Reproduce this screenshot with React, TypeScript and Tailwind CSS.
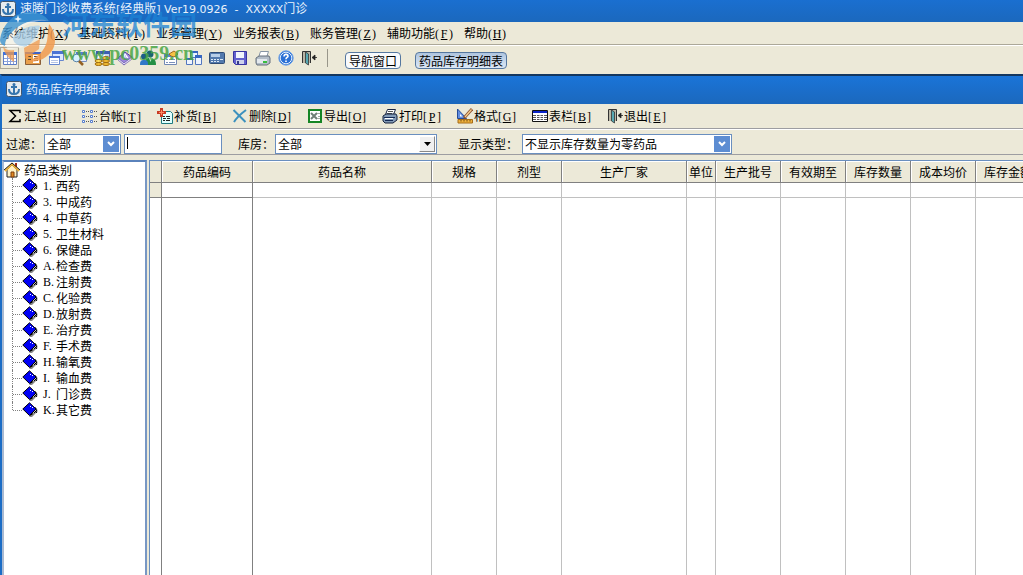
import type { ReactNode } from "react";

type Kids = { children?: ReactNode };

const Key = ({ open, k, close }: { open: string; k: string; close: string }) => (
  <span className="inline-flex w-[18px] justify-between font-['Liberation_Serif',serif] text-[12px]">
    <span>{open}</span>
    <u>{k}</u>
    <span>{close}</span>
  </span>
);

const Pic = ({ children }: Kids) => (
  <svg viewBox="0 0 16 16" className="h-4 w-4 shrink-0" aria-hidden="true">
    {children}
  </svg>
);

const AnchorIcon = () => (
  <Pic>
    <rect x="0.5" y="0.5" width="15" height="15" rx="2" fill="#e6ebf0" stroke="#42566e" />
    <path d="M8 4v9M5 6h6M3 8c0 3 2 5 5 5s5-2 5-5" fill="none" stroke="#3674ad" strokeWidth="2" />
    <circle cx="8" cy="3.5" r="1.5" fill="#3674ad" />
  </Pic>
);

const GridIcon = () => (
  <Pic>
    <path d="M1.500 2.500h13v12h-13z" fill="#fff" stroke="#5c7cc4" />
    <path d="M1 2h14v3H1z" fill="#3f73dc" />
    <path d="M2 8.500h12M2 11.500h12M5.500 5v9M8.500 5v9M11.500 5v9" stroke="#8ba3dc" fill="none" />
  </Pic>
);
const FormIcon = () => (
  <Pic>
    <path d="M.5 2.500h15v12H.5z" fill="#e9a04c" stroke="#8a5f39" />
    <path d="M0 2h16v2H0z" fill="#3f63c8" />
    <path d="M8 5h6v8H8z" fill="#fff" />
    <path d="M9 6.500h4M9 8.500h4M9 10.500h4M3 6.500h3M3 9.500h3" stroke="#5d4834" />
  </Pic>
);
const WindowsIcon = () => (
  <Pic>
    <path d="M4.500 1.500h11v9h-11z" fill="#dce8ff" stroke="#6687cf" />
    <path d="M4 1h12v3H4z" fill="#4a73d4" />
    <path d="M1.500 6.500h10v8h-10z" fill="#fff" stroke="#6687cf" />
    <path d="M1 6h11v2H1z" fill="#4a73d4" />
    <path d="M3 10.500h7M3 12.500h7" stroke="#b3c3e6" />
  </Pic>
);
const SearchIcon = () => (
  <Pic>
    <path d="M5.500 3.500h10v8h-10z" fill="#e8eefb" stroke="#7890c0" />
    <path d="M5 2h11v3H5z" fill="#567dce" />
    <circle cx="5.500" cy="8" r="3.800" fill="#d8f2ff" stroke="#5682a8" />
    <path d="M8 11l4 4" stroke="#946124" strokeWidth="2.500" />
  </Pic>
);
const CoinsIcon = () => (
  <Pic>
    <path d="M2.500 1.500h13v8h-13z" fill="#c6d3ef" stroke="#5672ad" />
    <path d="M2 1h14v3H2z" fill="#3d5eb0" />
    <path d="M4 6h3v2H4zM8 5h3v2H8z" fill="#fff" />
    <ellipse cx="12" cy="8" rx="3.500" ry="1.500" fill="#ffdf5a" stroke="#9c6a12" />
    <ellipse cx="12" cy="11" rx="3.500" ry="1.500" fill="#f3bd33" stroke="#9c6a12" />
    <ellipse cx="12" cy="14" rx="3.500" ry="1.500" fill="#f3bd33" stroke="#9c6a12" />
    <ellipse cx="4.500" cy="11" rx="3.500" ry="1.500" fill="#ffdf5a" stroke="#9c6a12" />
    <ellipse cx="4.500" cy="14" rx="3.500" ry="1.500" fill="#f3bd33" stroke="#9c6a12" />
  </Pic>
);
const BookIcon = () => (
  <Pic>
    <path d="M1 8l7-6 7 5-8 8z" fill="#9b86da" stroke="#54429a" />
    <path d="M1 8l6 5 8-6v2l-8 6-6-5z" fill="#e9e4fa" stroke="#54429a" strokeWidth=".6" />
    <path d="M6 9l2-5 3 4M7 7h3" stroke="#fff" strokeWidth="1.200" fill="none" />
  </Pic>
);
const PeopleIcon = () => (
  <Pic>
    <circle cx="10" cy="4" r="3.500" fill="#1b6472" />
    <path d="M5 15c0-6 1-7 5-7s6 2 6 7z" fill="#249045" />
    <circle cx="4" cy="6.500" r="3" fill="#1d5d88" />
    <path d="M0 15c0-4 1-5 4-5s4 1 4 5z" fill="#3078c8" />
    <path d="M9 8h3l-1.500 4z" fill="#bfe9cf" />
  </Pic>
);
const NoteIcon = () => (
  <Pic>
    <path d="M1.500 4.500h12v10h-12z" fill="#fff" stroke="#7289b5" />
    <path d="M1 4h13v3H1z" fill="#5e80cd" />
    <path d="M3 9.500h2M6 9.500h6M3 12.500h2M6 12.500h6" stroke="#7b91bc" />
    <path d="M6 4l5-3 4 3-4 3-3-1z" fill="#f5c244" stroke="#a36b22" />
  </Pic>
);
const LinkIcon = () => (
  <Pic>
    <path d="M4.500 1.500h7v6h-7zM.5 8.500h6v6h-6zM9.500 5.500h6v9h-6z" fill="#edf4ff" stroke="#5377bf" />
    <path d="M4 1h8v2H4zM0 8h7v2H0zM9 5h7v3H9z" fill="#3566c1" />
  </Pic>
);
const CardIcon = () => (
  <Pic>
    <rect x=".5" y="2.500" width="15" height="11" rx="1" fill="#5279ad" stroke="#314d75" />
    <path d="M2 4h9v3H2z" fill="#b7cee8" />
    <path d="M2 9h2v1H2zM5 9h2v1H5zM8 9h2v1H8zM11 9h3v1h-3zM2 11h2v1H2zM5 11h2v1H5zM8 11h2v1H8z" fill="#dce9f5" />
  </Pic>
);
const SaveIcon = () => (
  <Pic>
    <path d="M1.500 1.500h13v13h-11l-2-2z" fill="#6260ce" stroke="#3733a0" />
    <path d="M4 2h8v6H4z" fill="#f1f4fc" />
    <path d="M4 10h8v4H4z" fill="#cdd1ec" />
    <path d="M5 11h2v3H5z" fill="#373e87" />
  </Pic>
);
const PrintIcon = () => (
  <Pic>
    <path d="M5.500 1.500h8l-2 6h-8z" fill="#fff" stroke="#8795a5" />
    <path d="M1 8l3-2h10l1 2v5l-3 2H2l-1-2z" fill="#b3bdc8" stroke="#67717d" />
    <path d="M2 9h10v4H2z" fill="#e4e9ee" />
    <path d="M8 11h4v2H8z" fill="#38bd3f" />
  </Pic>
);
const HelpIcon = () => (
  <Pic>
    <circle cx="8" cy="8" r="7.200" fill="#2b70d5" stroke="#6da1e6" />
    <circle cx="8" cy="8" r="5.800" fill="none" stroke="#e2edfb" />
    <path d="M6 6.500c0-3 4-2.500 4-.3 0 1.300-2 1.300-2 3M8 10.500V12" fill="none" stroke="#fff" strokeWidth="1.600" />
  </Pic>
);
const ExitIcon = () => (
  <Pic>
    <path d="M1.500 13V1.500h8V13" fill="#b9b5a5" stroke="#333" />
    <path d="M4.500 2l3 2v11l-3-2z" fill="#58a8b2" stroke="#333" strokeWidth=".8" />
    <path d="M16 7.500h-4M14 5v5L11 7.500z" stroke="#222" fill="#222" strokeWidth=".8" />
  </Pic>
);
const SigmaIcon = () => (
  <Pic>
    <path d="M13 5V2.500H3L8.500 8 3 13.500h10V11" fill="none" stroke="#000" strokeWidth="1.500" />
  </Pic>
);
const ListIcon = () => (
  <Pic>
    <path d="M.5 2.500h2v2h-2zM.5 7.500h2v2h-2zM.5 12.500h2v2h-2zM8.500 2.500h2v2h-2zM8.500 7.500h2v2h-2zM8.500 12.500h2v2h-2z" fill="#fff" stroke="#547cce" />
    <path d="M4 3.500h3M4 8.500h3M4 13.500h3M12 3.500h3M12 8.500h3M12 13.500h3" stroke="#555" strokeDasharray="1 1" />
  </Pic>
);
const RestockIcon = () => (
  <Pic>
    <path d="M4.500 3.500h9l2 2v10h-11z" fill="#e0ffff" stroke="#207b80" />
    <path d="M6 8.500h2M9 8.500h4M6 10.500h3M10 10.500h3M6 12.500h2M9 12.500h4" stroke="#222" />
    <path d="M3 0h3v3h3v3H6v3H3V6H0V3h3z" fill="#c83b25" />
    <path d="M4.500 2v5M2 4.500h5" stroke="#ff8b65" />
  </Pic>
);
const DeleteIcon = () => (
  <Pic>
    <path d="M1.500 2l12 12M14 2C10 5 5 9 2 14" fill="none" stroke="#3c91be" strokeWidth="2" />
  </Pic>
);
const ExcelIcon = () => (
  <Pic>
    <path d="M2 2h12v12H2z" fill="#fff" stroke="#158525" strokeWidth="2" />
    <path d="M4 5l6 6M10 5l-6 6" stroke="#708078" strokeWidth="2" />
    <path d="M10 5.500h3M11 8.500h2M10 10.500h3" stroke="#a2aaa5" />
  </Pic>
);
const PrinterIcon = () => (
  <Pic>
    <path d="M5.500 1.500h8l-2 5h-8z" fill="#fff" stroke="#172343" />
    <path d="M6 3.500h5M5 5.500h5" stroke="#555" />
    <path d="M1 8l3-2h10l1 2v4l-4 3H3l-2-2z" fill="#839bb8" stroke="#16223d" />
    <path d="M2 9.500h11M3 12.500h8" stroke="#152a55" />
    <path d="M3 10.500h8" stroke="#fff" />
  </Pic>
);
const FormatIcon = () => (
  <Pic>
    <path d="M.5 1l9 9.500h-9z" fill="#638ee0" stroke="#244b9a" />
    <path d="M3 6l2.500 2.500H3z" fill="#fff" />
    <path d="M1 11.500h14.500v3.500H1z" fill="#efb13d" stroke="#a66c18" />
    <path d="M4 12v1.500M7 12v1.500M10 12v1.500M13 12v1.500" stroke="#714a12" />
    <path d="M15 1L7 10" stroke="#8c5131" strokeWidth="3" />
    <path d="M14.500 1.500L8 9" stroke="#f7cf8c" strokeWidth="1.200" />
  </Pic>
);
const TableIcon = () => (
  <Pic>
    <path d="M.5 2.500h15v11H.5z" fill="#fff" stroke="#111" />
    <path d="M1 3h14v2H1z" fill="#0b24c9" />
    <path d="M1 7.500h14M1 9.500h14M1 11.500h14" stroke="#555" />
    <path d="M4.500 5v8M8 5v8M11.500 5v8" stroke="#fff" />
  </Pic>
);
const HouseIcon = () => (
  <Pic>
    <path d="M11 1h2v4h-2z" fill="#a12c16" />
    <path d="M3 8l5-5 5 5v7H3z" fill="#fff3c7" stroke="#222" />
    <path d="M1 9l7-7 7 7" fill="none" stroke="#efb43c" strokeWidth="2" />
    <path d="M0 8l8-7 8 7" fill="none" stroke="#222" />
    <path d="M7 10h3v5H7z" fill="#e38a20" stroke="#7d3d0c" />
  </Pic>
);
const DiamondIcon = () => (
  <Pic>
    <path d="M7 15l7-7v3l-4 4H7z" fill="#888" />
    <path d="M.8 7L7.500.8 14 7l-6.500 6.500z" fill="#0000f5" stroke="#000" />
    <path d="M13 5.500c2 1 2 3 1.500 5.500M12 11l3-3M8 13.500l3-2" fill="none" stroke="#000" />
    <path d="M8 4h1v1H8zM10 5h1v1h-1z" fill="#fff" />
  </Pic>
);

const menus = [
  ["系统维护", "X"],
  ["基础资料", "I"],
  ["业务管理", "Y"],
  ["业务报表", "B"],
  ["账务管理", "Z"],
  ["辅助功能", "F"],
  ["帮助", "H"],
];

const tools = [
  ["表格", GridIcon],
  ["表单", FormIcon],
  ["窗口", WindowsIcon],
  ["查询", SearchIcon],
  ["收费", CoinsIcon],
  ["账簿", BookIcon],
  ["人员", PeopleIcon],
  ["单据", NoteIcon],
  ["关联", LinkIcon],
  ["卡片", CardIcon],
  ["保存", SaveIcon],
  ["打印", PrintIcon],
  ["帮助", HelpIcon],
  ["退出", ExitIcon],
] as const;

const actions = [
  ["汇总", "H", SigmaIcon],
  ["台帐", "T", ListIcon],
  ["补货", "B", RestockIcon],
  ["删除", "D", DeleteIcon],
  ["导出", "O", ExcelIcon],
  ["打印", "P", PrinterIcon],
  ["格式", "G", FormatIcon],
  ["表栏", "B", TableIcon],
  ["退出", "E", ExitIcon],
] as const;

const categories = [
  ["1", "西药"],
  ["3", "中成药"],
  ["4", "中草药"],
  ["5", "卫生材料"],
  ["6", "保健品"],
  ["A", "检查费"],
  ["B", "注射费"],
  ["C", "化验费"],
  ["D", "放射费"],
  ["E", "治疗费"],
  ["F", "手术费"],
  ["H", "输氧费"],
  ["I", "输血费"],
  ["J", "门诊费"],
  ["K", "其它费"],
];

const columns = [
  ["药品编码", "w-[91px]"],
  ["药品名称", "w-[179px]"],
  ["规格", "w-[65px]"],
  ["剂型", "w-[65px]"],
  ["生产厂家", "w-[125px]"],
  ["单位", "w-[29px]"],
  ["生产批号", "w-[65px]"],
  ["有效期至", "w-[65px]"],
  ["库存数量", "w-[65px]"],
  ["成本均价", "w-[65px]"],
  ["库存金额", "w-[65px]"],
];

function Picker({ id, value, width, classic }: { id: string; value: string; width: string; classic?: boolean }) {
  return (
    <span className={`relative block h-5 ${width}`}>
      <select
        id={id}
        className="block h-5 w-full appearance-none border border-[#6a8fbf] bg-white pl-0.5 leading-[18px] outline-none"
      >
        <option>{value}</option>
      </select>
      {classic ? (
        <span className="pointer-events-none absolute top-0.5 right-0.5 flex h-4 w-4 items-center justify-center border border-t-white border-r-[#888] border-b-[#888] border-l-white bg-[#f0f0f0]">
          <svg viewBox="0 0 7 4" className="h-1 w-[7px]"><path d="M0 0h7L3.500 4z" /></svg>
        </span>
      ) : (
        <span className="pointer-events-none absolute top-0.5 right-0.5 flex h-4 w-4 items-center justify-center bg-[#5d8dd2]">
          <svg viewBox="0 0 8 6" className="h-1.5 w-2"><path d="M1 1l3 3 3-3" fill="none" stroke="#fff" strokeWidth="2" /></svg>
        </span>
      )}
    </span>
  );
}

function Watermark() {
  return (
    <div className="pointer-events-none absolute top-2 left-0 flex items-start gap-1">
      <svg viewBox="0 0 58 56" className="h-14 w-[58px]" aria-hidden="true">
        <path d="M0 32C2 18 12 5 29 4c9 0 16 3 20 9C37 9 18 14 8 29c-3 4-3 7-3 9-3-1-5-3-5-6z" fill="#3c93d2" opacity=".8" />
        <path d="M13 30c7-9 17-13 27-12-2 8-7 17-14 20-6 1-13-2-13-8z" fill="#3c93d2" opacity=".6" />
        <path d="M49 13C37 9 18 14 8 29c-3 5-3 9 0 12 9 0 18-2 24-7 4-4 8-10 8-16-10-1-20 3-27 12 4-10 19-19 36-17z" fill="#fff" opacity=".45" />
        <path d="M49 16c6 7 8 17 4 25-5 9-14 13-25 13 9-5 17-11 19-21 1-6 1-11 2-17z" fill="#f19a4e" opacity=".85" />
        <path d="M3 38c2 4 6 5 11 4v12C8 50 4 45 3 38z" fill="#f19a4e" opacity=".75" />
        <path d="M24 40l16-9-1 10-14 10z" fill="#f19a4e" opacity=".75" />
        <path d="M18 7l1 3 3 1-3 1-1 3-1-3-3-1 3-1z" fill="#e9f3fb" />
      </svg>
      <div className="flex flex-col">
        <span className="h-8 text-[27px] leading-8 font-bold text-[#1c83d5]/75">河东软件园</span>
        <span className="pt-px font-['Liberation_Serif',serif] text-[20px] leading-6 font-bold text-[#4aa646]/85">www.pc0359.cn</span>
      </div>
    </div>
  );
}

export default function App() {
  return (
    <div className="relative flex h-screen flex-col overflow-hidden bg-[#ece9d8] font-['Noto_Sans_CJK_SC',sans-serif] text-[12px] leading-4 text-black">
      <header className="flex h-[22px] shrink-0 items-center gap-1 bg-linear-to-b from-[#1a6fd0] to-[#1b68bd] pb-1 text-[#e8f1fb]">
        <AnchorIcon />
        <h1 className="whitespace-pre">
          速腾门诊收费系统
          <span className="font-['DejaVu_Sans',sans-serif] text-[11px]">[</span>
          经典版
          <span className="font-['DejaVu_Sans',sans-serif] text-[11px]">{"] Ver19.0926  -  XXXXX"}</span>
          门诊
        </h1>
      </header>

      <nav className="flex h-[23px] shrink-0 items-center gap-[11px] border-b border-[#aca899] pl-0.5">
        {menus.map(([name, k]) => (
          <button key={k} type="button" className="whitespace-nowrap">
            {name}
            <Key open="(" k={k} close=")" />
          </button>
        ))}
      </nav>

      <div className="flex h-[29px] shrink-0 items-center border-t border-white pb-1">
        {tools.map(([name, Icon], i) => (
          <button
            key={name}
            type="button"
            aria-label={name}
            className={`flex h-[22px] items-center justify-center ${i === 0 ? "mr-0.5 w-[19px] border border-[#aca899]" : "w-[23px]"}`}
          >
            <Icon />
          </button>
        ))}
        <span className="mx-[7px] h-[18px] w-px bg-[#98968a]" />
        <div className="flex items-center gap-3.5 pt-1 pl-2.5">
          <button type="button" className="h-[17px] rounded border border-[#55779f] bg-[#f8fafc] px-[3px] leading-[15px]">导航窗口</button>
          <button type="button" className="h-[17px] rounded border border-[#55779f] bg-linear-to-b from-[#afc5df] to-[#dce8f5] px-[3px] leading-[15px]">药品库存明细表</button>
        </div>
      </div>

      <section className="flex min-h-0 flex-1 flex-col border-t-2 border-l-2 border-t-[#14375f] border-l-[#1b6dc6]">
        <div className="flex h-7 shrink-0 items-center gap-1 bg-linear-to-b from-[#1a74d8] to-[#1b68bd] pb-0.5 pl-1 text-[#e8f1fb]">
          <AnchorIcon />
          <h2>药品库存明细表</h2>
        </div>

        <div className="flex h-[25px] shrink-0 items-center border-b border-[#9d9da1] pl-[5px]">
          {actions.map(([name, k, Icon]) => (
            <button key={name + k} type="button" className="flex w-[75px] items-center gap-px whitespace-nowrap">
              <Icon />
              <span>
                {name}
                <Key open="[" k={k} close="]" />
              </span>
            </button>
          ))}
        </div>

        <form className="flex h-[26px] shrink-0 items-end border-t border-b border-t-white border-b-[#9d9da1] pl-1">
          <label htmlFor="category" className="w-[38px] leading-5 whitespace-nowrap">过滤：</label>
          <Picker id="category" value="全部" width="w-[77px]" />
          <span className="relative ml-[3px] block">
            <input aria-label="过滤内容" className="block h-5 w-[98px] border border-[#6a8fbf] bg-white px-[3px] outline-none" />
            <span className="absolute top-[3px] left-[3px] h-3 w-px bg-black" />
          </span>
          <label htmlFor="store" className="ml-4 w-[37px] leading-5 whitespace-nowrap">库房：</label>
          <Picker id="store" value="全部" width="w-[162px]" classic />
          <label htmlFor="kind" className="ml-[21px] w-16 leading-5 whitespace-nowrap">显示类型：</label>
          <Picker id="kind" value="不显示库存数量为零药品" width="w-[210px]" />
        </form>

        <div className="flex min-h-0 flex-1 gap-0.5 pt-[5px]">
          <aside className="w-[145px] shrink-0 border-2 border-b-0 border-[#7897c4] border-t-[#5a82bb] border-l-[#a9bad2] bg-white">
            <div className="flex h-4 items-center gap-1">
              <HouseIcon />
              <span>药品类别</span>
            </div>
            <ul className="pl-2">
              {categories.map(([code, name], i) => (
                <li key={code} className="flex h-4 items-center">
                  <span className={`w-px self-start border-l border-dotted border-[#808080] ${i === categories.length - 1 ? "h-2" : "h-4"}`} />
                  <span className="w-[9px] border-t border-dotted border-[#808080]" />
                  <DiamondIcon />
                  <span className="flex pl-[5px]">
                    <span className="flex w-[13px] font-['Liberation_Serif',serif]">
                      {code}.
                    </span>
                    <span>{name}</span>
                  </span>
                </li>
              ))}
            </ul>
          </aside>

          <div className="min-w-0 flex-1 overflow-hidden border-t border-l border-[#6a8fbf] bg-white">
            <table className="h-full w-[891px] table-fixed border-separate border-spacing-0">
              <thead>
                <tr className="h-[22px]">
                  <th className="w-3 border-r border-b border-[#808080] bg-[#ece9d8] p-0" />
                  {columns.map(([name, width]) => (
                    <th
                      key={name}
                      className={`${width} border-r border-b border-[#808080] bg-[#ece9d8] p-0 font-normal whitespace-nowrap shadow-[inset_1px_1px_0_#fff]`}
                    >
                      {name}
                    </th>
                  ))}
                </tr>
              </thead>
              <tbody>
                <tr className="h-[15px]">
                  <td className="border-r border-b border-[#808080] bg-[#ece9d8] p-0" />
                  {columns.map(([name], i) => (
                    <td key={name} className={`border-r border-b p-0 ${i === 0 ? "border-[#808080]" : "border-[#c0c0c0]"}`} />
                  ))}
                </tr>
                <tr>
                  <td className="border-r border-[#808080] p-0" />
                  {columns.map(([name], i) => (
                    <td key={name} className={`border-r p-0 ${i === 0 ? "border-[#808080]" : "border-[#c0c0c0]"}`} />
                  ))}
                </tr>
              </tbody>
            </table>
          </div>
        </div>
      </section>
      <Watermark />
    </div>
  );
}
